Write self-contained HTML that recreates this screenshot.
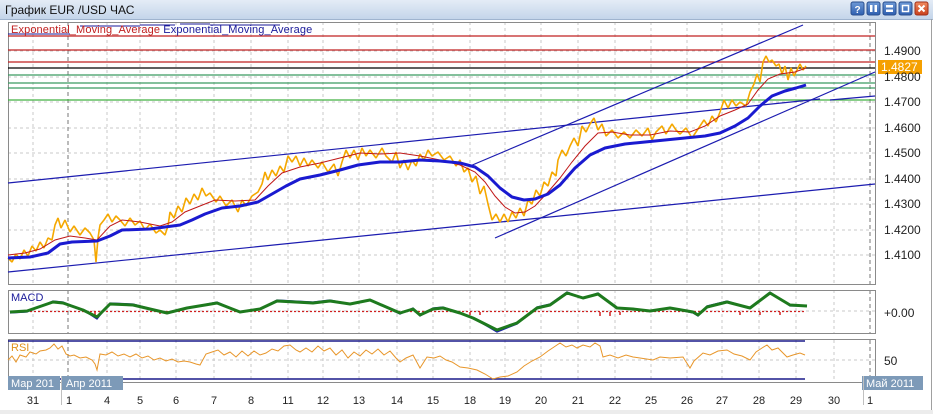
<!DOCTYPE html>
<html><head><meta charset="utf-8"><style>
html,body{margin:0;padding:0;background:#fff;}
body{width:933px;height:414px;overflow:hidden;}
svg{display:block;font-family:"Liberation Sans","DejaVu Sans",sans-serif;}
</style></head><body>
<svg width="933" height="414" viewBox="0 0 933 414" xmlns="http://www.w3.org/2000/svg">
<defs>
<linearGradient id="tb" x1="0" y1="0" x2="0" y2="1"><stop offset="0" stop-color="#e4ecf6"/><stop offset="1" stop-color="#c4d5ea"/></linearGradient>
<linearGradient id="bt" x1="0" y1="0" x2="0" y2="1"><stop offset="0" stop-color="#6f9ad6"/><stop offset="1" stop-color="#2e5fb0"/></linearGradient>
<linearGradient id="bx" x1="0" y1="0" x2="0" y2="1"><stop offset="0" stop-color="#f08a60"/><stop offset="1" stop-color="#c8401c"/></linearGradient>
</defs>
<rect width="933" height="414" fill="#fff"/>
<rect x="0" y="0" width="933" height="19" fill="url(#tb)"/>
<line x1="0" y1="19.5" x2="933" y2="19.5" stroke="#9fb4cf"/>
<text x="5" y="14" font-size="12" fill="#111">График EUR /USD  ЧАС</text>
<g>
<rect x="851" y="2" width="13" height="13" rx="2" fill="url(#bt)" stroke="#2a4f8f"/><text x="857.5" y="13" font-size="10" font-weight="bold" fill="#fff" text-anchor="middle">?</text>
<rect x="867" y="2" width="13" height="13" rx="2" fill="url(#bt)" stroke="#2a4f8f"/><rect x="870" y="5" width="2.5" height="7" fill="#fff"/><rect x="874.5" y="5" width="2.5" height="7" fill="#fff"/>
<rect x="883" y="2" width="13" height="13" rx="2" fill="url(#bt)" stroke="#2a4f8f"/><rect x="886" y="5" width="7" height="2.5" fill="#fff"/><rect x="886" y="9.5" width="7" height="2.5" fill="#fff"/>
<rect x="899" y="2" width="13" height="13" rx="2" fill="url(#bt)" stroke="#2a4f8f"/><rect x="902.5" y="5.5" width="6" height="6" fill="none" stroke="#fff" stroke-width="1.5"/>
<rect x="915" y="2" width="13" height="13" rx="2" fill="url(#bx)" stroke="#a0301a"/><path d="M918.5 5.5l6 6M924.5 5.5l-6 6" stroke="#fff" stroke-width="2"/>
</g>
<line x1="931.5" y1="19" x2="931.5" y2="414" stroke="#a0a0a0"/>

<g stroke="#c8c8c8" stroke-dasharray="3,3">
<path d="M33 22V284M107 22V284M140 22V284M176 22V284M214 22V284M251 22V284M288 22V284M323 22V284M359 22V284M397 22V284M433 22V284M470 22V284M505 22V284M541 22V284M578 22V284M615 22V284M651 22V284M687 22V284M722 22V284M759 22V284M796 22V284M834 22V284"/>
<path d="M33 290V333M107 290V333M140 290V333M176 290V333M214 290V333M251 290V333M288 290V333M323 290V333M359 290V333M397 290V333M433 290V333M470 290V333M505 290V333M541 290V333M578 290V333M615 290V333M651 290V333M687 290V333M722 290V333M759 290V333M796 290V333M834 290V333"/>
<path d="M33 340V382M107 340V382M140 340V382M176 340V382M214 340V382M251 340V382M288 340V382M323 340V382M359 340V382M397 340V382M433 340V382M470 340V382M505 340V382M541 340V382M578 340V382M615 340V382M651 340V382M687 340V382M722 340V382M759 340V382M796 340V382M834 340V382"/>
<path d="M8 51H875M8 77H875M8 102H875M8 128H875M8 153H875M8 179H875M8 204H875M8 230H875M8 255H875"/>
<path d="M8 311H875M8 360H875"/>
</g>
<g stroke="#777" stroke-dasharray="4,3"><path d="M68 22V284M68 290V333M68 340V382M870 22V284M870 290V333M870 340V382"/></g>
<rect x="8.5" y="22.5" width="867" height="262" fill="none" stroke="#8a8a8a"/>
<rect x="8.5" y="290.5" width="867" height="43" fill="none" stroke="#8a8a8a"/>
<rect x="8.5" y="339.5" width="867" height="43" fill="none" stroke="#8a8a8a"/>

<g stroke-width="1.2">
<path d="M8 36H875M8 50H875M8 62H875" stroke="#c02020"/>
<path d="M8 68H875" stroke="#000"/>
<path d="M8 75H875M8 83H875M8 88H875" stroke="#3a9a60"/>
<path d="M8 100H875" stroke="#40b040"/>
</g>
<path d="M8 34H70M80 26H140M140 25H175M180 24H210M210 25H280" stroke="#1a1a9a" stroke-width="1"/>
<text x="11" y="33" font-size="11" fill="#c02020" letter-spacing="0.12">Exponential_Moving_Average <tspan fill="#1a1a9a">Exponential_Moving_Average</tspan></text>

<g stroke="#1c1cb0" stroke-width="1.2" fill="none">
<path d="M8 183L820 99"/>
<path d="M830 100L875 96"/>
<path d="M8 272L875 184"/>
<path d="M470 166L803 25"/>
<path d="M495 238L875 72"/>
</g>

<polyline fill="none" stroke="#f5a800" stroke-width="1.6" stroke-linejoin="bevel" points="8,258 12,262 16,254 20,259 24,250 28,256 32,246 36,251 40,242 44,248 48,238 52,240 55,225 58,218 61,228 65,220 70,232 74,226 80,235 85,228 90,233 94,240 96,262 98,238 100,225 104,220 108,214 112,222 116,216 120,220 125,226 130,218 135,225 140,221 145,230 150,224 156,233 160,230 165,235 168,226 170,212 174,218 178,206 182,212 186,198 190,204 194,194 198,200 202,188 206,196 210,193 216,202 220,196 226,206 232,200 238,212 242,200 246,206 252,196 258,192 262,184 265,172 268,180 272,170 276,176 280,166 284,172 288,156 292,162 296,156 300,166 304,158 308,166 312,160 318,168 322,162 328,172 334,164 338,176 342,162 346,150 350,158 354,150 358,160 362,148 366,156 370,150 376,158 382,148 386,156 392,162 396,152 400,168 404,160 408,170 412,160 416,166 420,154 424,160 428,150 432,156 438,152 444,160 450,156 456,166 460,160 464,172 468,168 472,182 476,176 480,194 484,186 488,204 492,220 496,214 500,222 504,214 508,222 512,212 516,218 520,208 524,216 528,200 532,204 536,190 540,196 544,182 548,186 552,172 556,176 558,160 562,150 566,156 570,146 574,138 578,146 582,126 586,132 590,124 594,118 598,130 602,124 606,136 612,130 618,138 624,132 630,138 636,130 642,136 648,128 652,140 656,132 662,126 666,134 672,124 676,130 680,134 686,128 692,138 696,132 700,126 704,120 708,126 712,116 716,122 720,112 724,100 728,108 732,100 736,106 740,102 746,106 750,92 754,84 757,74 760,82 763,62 766,56 769,62 772,60 776,66 779,64 782,74 785,66 788,80 791,68 794,76 797,70 800,64 803,70 806,66"/>
<polyline fill="none" stroke="#c01818" stroke-width="1" points="8,255 25,253 40,249 55,240 70,236 85,238 97,240 110,226 122,220 140,222 160,226 172,222 185,212 200,206 215,200 235,201 255,200 268,186 282,173 300,167 320,163 340,158 360,153 380,154 400,153 420,156 440,160 460,165 475,172 485,182 495,196 505,207 515,213 525,212 535,206 548,192 560,178 572,162 585,146 598,133 612,132 630,135 650,135 670,131 690,132 705,126 720,116 735,110 748,104 758,90 768,79 780,74 795,72 806,68"/>
<polyline fill="none" stroke="#1a1ad0" stroke-width="3" stroke-linejoin="round" points="8,258 30,257 48,253 60,244 72,242 97,241 110,236 122,230 150,229 180,225 192,220 205,214 222,208 240,206 258,202 272,194 286,186 300,179 320,175 340,170 358,165 380,162 400,162 420,160 440,161 460,163 475,167 488,176 500,188 512,197 524,200 535,199 548,194 560,185 575,168 590,155 605,148 625,144 645,142 665,140 685,138 705,136 720,133 735,126 748,118 760,106 772,96 785,91 796,88 806,85"/>

<rect x="878" y="60" width="44" height="14" fill="#f5a000"/>
<text x="881" y="71" font-size="12" fill="#fff">1.4827</text>
<g font-size="12" fill="#222">
<text x="884" y="55">1.4900</text>
<text x="884" y="81">1.4800</text>
<text x="884" y="106">1.4700</text>
<text x="884" y="132">1.4600</text>
<text x="884" y="157">1.4500</text>
<text x="884" y="183">1.4400</text>
<text x="884" y="208">1.4300</text>
<text x="884" y="234">1.4200</text>
<text x="884" y="259">1.4100</text>
<text x="884" y="317">+0.00</text>
<text x="884" y="365">50</text>
</g>

<text x="11" y="301" font-size="11" fill="#1a1a9a">MACD</text>
<path d="M10 311.5H806" stroke="#d02020" stroke-width="1.2" stroke-dasharray="2,2"/>
<path d="M470 312v3M480 312v3M600 312v4M610 312v4M620 312v3M740 312v3M760 312v3M780 312v3M160 312v2M95 312v3" stroke="#d02020" stroke-width="1.5"/>
<polyline fill="none" stroke="#1a1ab0" stroke-width="1.3" points="10,313 27,312 53,301 63,302 83,310 97,319 110,303 133,304 167,313 187,308 217,302 240,312 260,309 277,300 313,302 330,300 350,304 370,300 400,314 413,308 420,316 433,308 443,307 460,313 473,318 497,332 517,324 537,307 550,304 567,292 583,298 598,293 617,308 633,309 650,311 670,308 693,313 698,316 707,306 727,301 750,308 770,292 790,306 807,306"/>
<polyline fill="none" stroke="#1e7a1e" stroke-width="3" stroke-linejoin="round" points="10,312 27,311 53,302 63,303 83,310 97,317 110,304 133,305 167,313 187,308 217,303 240,312 260,309 277,301 313,303 330,301 350,304 370,300 400,313 413,309 420,315 433,309 443,308 460,313 473,318 497,330 517,323 537,308 550,305 567,293 583,298 598,294 617,308 633,309 650,311 670,308 693,312 698,315 707,307 727,302 750,308 770,293 790,305 807,306"/>

<path d="M8 341H805M8 379H805" stroke="#1a1a8a" stroke-width="1.4"/>
<text x="11" y="351" font-size="11" fill="#e0901a">RSI</text>
<polyline fill="none" stroke="#e8962a" stroke-width="1" points="8,360 12,356 16,362 20,355 26,357 30,352 36,354 40,351 46,350 50,348 54,344 58,349 62,346 66,354 70,356 74,355 80,358 86,357 92,360 95,364 97,370 100,354 106,355 112,352 118,356 124,354 130,357 136,354 142,358 148,356 154,360 160,358 166,361 172,359 178,362 184,361 190,362 196,364 200,365 206,354 212,352 218,350 224,355 230,352 236,357 242,351 248,356 254,351 260,355 266,353 272,349 278,351 284,346 290,345 296,350 300,352 306,348 312,352 318,346 324,351 330,348 336,355 342,350 348,358 354,352 360,356 366,350 372,354 378,349 384,355 390,351 396,358 400,362 406,358 413,355 420,368 427,357 434,358 440,356 446,360 452,362 460,367 468,368 477,370 485,374 493,379 500,377 508,376 517,372 524,366 532,361 540,357 548,351 554,347 560,343 566,347 572,345 577,348 583,345 590,347 595,343 600,346 603,357 610,355 618,358 626,355 633,357 640,358 653,360 660,357 670,358 683,357 690,368 694,361 703,353 710,355 718,351 727,350 734,354 742,356 750,360 756,352 762,348 767,345 772,350 778,348 787,357 793,355 800,353 805,355"/>

<rect x="8" y="376" width="52" height="14" fill="#7d9ab8"/>
<rect x="62" y="376" width="61" height="14" fill="#7d9ab8"/>
<rect x="862" y="376" width="61" height="14" fill="#7d9ab8"/>
<g font-size="11" fill="#fff">
<text x="11" y="387">Мар 201</text>
<text x="66" y="387">Апр 2011</text>
<text x="866" y="387">Май 2011</text>
</g>
<path d="M61.5 376V405M863.5 376V405" stroke="#c0c0c0"/>
<g font-size="11" fill="#222" text-anchor="middle">
<text x="33" y="404">31</text><text x="69" y="404">1</text><text x="107" y="404">4</text><text x="140" y="404">5</text><text x="176" y="404">6</text><text x="214" y="404">7</text><text x="251" y="404">8</text><text x="288" y="404">11</text><text x="323" y="404">12</text><text x="359" y="404">13</text><text x="397" y="404">14</text><text x="433" y="404">15</text><text x="470" y="404">18</text><text x="505" y="404">19</text><text x="541" y="404">20</text><text x="578" y="404">21</text><text x="615" y="404">22</text><text x="651" y="404">25</text><text x="687" y="404">26</text><text x="722" y="404">27</text><text x="759" y="404">28</text><text x="796" y="404">29</text><text x="834" y="404">30</text><text x="870" y="404">1</text>
</g>
<rect x="0" y="410" width="933" height="4" fill="#ececec"/>
</svg>
</body></html>
